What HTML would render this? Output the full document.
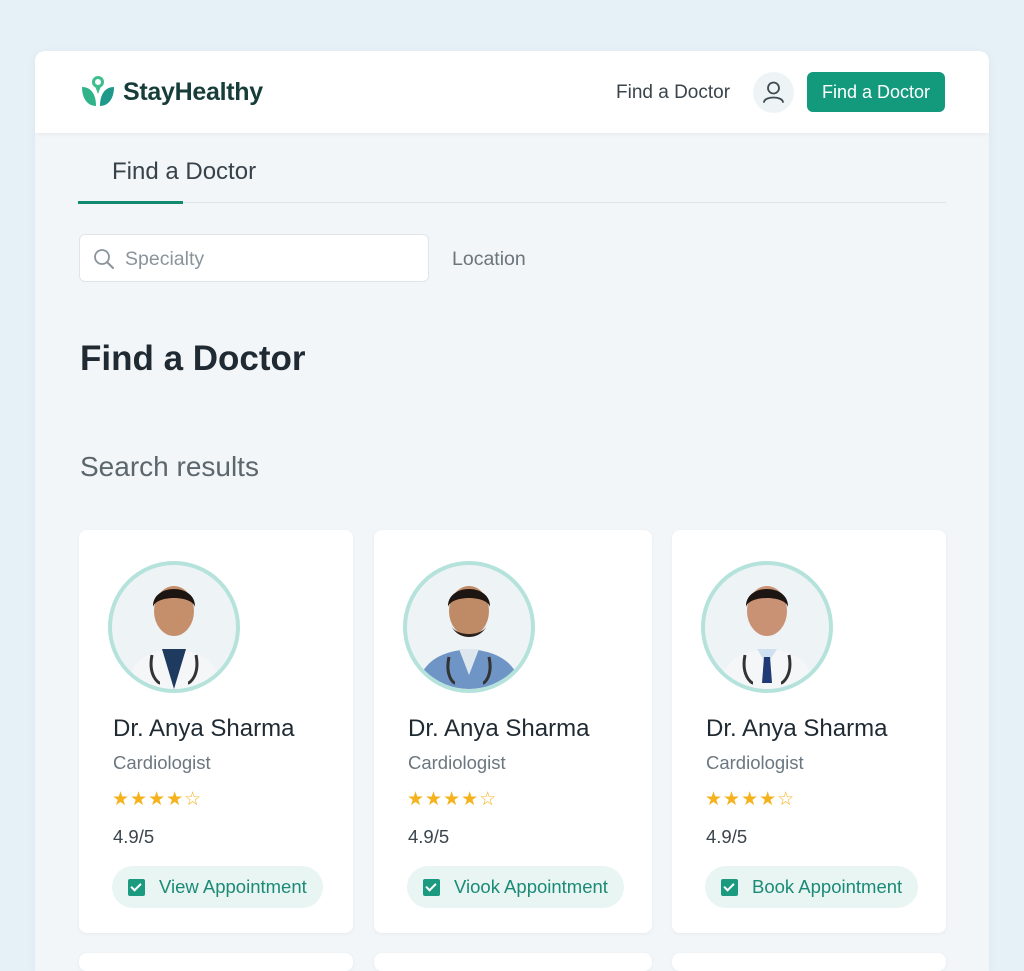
<!DOCTYPE html>
<html><head><style>
*{margin:0;padding:0;box-sizing:border-box}
html,body{width:1024px;height:971px;overflow:hidden}
body{background:#e6f1f7;font-family:"Liberation Sans",sans-serif;position:relative}
.wrap{position:absolute;left:35px;top:51px;width:954px;height:920px;background:#f2f6f8;border-radius:10px 10px 0 0;overflow:hidden;box-shadow:0 2px 10px rgba(0,0,0,.05)}
.hdr{position:absolute;left:0;top:0;width:954px;height:82px;background:#fff;box-shadow:0 2px 4px rgba(0,0,0,.04)}
.abs{position:absolute}
.card{position:absolute;top:479px;height:403px;background:#fff;border-radius:8px;box-shadow:0 1px 4px rgba(0,0,0,.05)}
.av{position:absolute;left:29px;top:31px;width:132px;height:132px;border-radius:50%;border:4px solid #b5e3dc;background:#eef3f6;overflow:hidden}
.nm{position:absolute;left:34px;top:185px;font-size:24px;color:#1f2a33}
.sp{position:absolute;left:34px;top:222px;font-size:18.5px;color:#6b7780}
.st{position:absolute;left:33px;top:258px;font-size:19px;color:#f5b21c;letter-spacing:1px}
.rt{position:absolute;left:34px;top:296px;font-size:18.5px;color:#3b454d}
.btn{position:absolute;left:33px;top:336px;height:42px;padding:0 16px 0 16px;border-radius:21px;background:#e8f5f3;color:#1b8a76;font-size:18.5px;line-height:42px;white-space:nowrap}
.cb{display:inline-block;width:17px;height:17px;background:#1b9a7f;border-radius:2px;vertical-align:-3px;margin-right:14px;position:relative}
.cb:after{content:"";position:absolute;left:5px;top:2px;width:4px;height:8px;border:solid #fff;border-width:0 2px 2px 0;transform:rotate(45deg)}
</style></head><body>
<div class="wrap">
 <div class="hdr">
  <svg class="abs" style="left:45px;top:24px" width="36" height="34" viewBox="0 0 36 34">
   <path d="M2 12 C10 12 16 18 16 31 C8 31 2 24 2 12Z" fill="#2fb389"/>
   <path d="M34 12 C26 12 20 18 20 31 C28 31 34 24 34 12Z" fill="#1f9a8a"/>
   <circle cx="18" cy="7" r="4.5" fill="none" stroke="#3cbf8c" stroke-width="3"/>
   <path d="M15 11 L18 19 L21 11Z" fill="#3cbf8c"/>
  </svg>
  <div class="abs" style="left:88px;top:27px;font-size:25px;font-weight:bold;color:#173d3a;letter-spacing:-.3px">StayHealthy</div>
  <div class="abs" style="left:581px;top:31px;font-size:19px;color:#3a444c">Find a Doctor</div>
  <div class="abs" style="left:718px;top:21px;width:41px;height:41px;border-radius:50%;background:#eef4f6">
   <svg width="41" height="41" viewBox="0 0 41 41"><circle cx="20.5" cy="16" r="5.5" fill="none" stroke="#3f4a52" stroke-width="1.8"/><path d="M11 30 C12 24 29 24 30 30" fill="none" stroke="#3f4a52" stroke-width="1.8" stroke-linecap="round"/></svg>
  </div>
  <div class="abs" style="left:772px;top:21px;width:138px;height:40px;border-radius:6px;background:#139a7d;color:#fff;font-size:18px;line-height:40px;text-align:center">Find a Doctor</div>
 </div>
 <div class="abs" style="left:77px;top:107px;font-size:24px;color:#37424a">Find a Doctor</div>
 <div class="abs" style="left:43px;top:151px;width:868px;height:1px;background:#dde4e8"></div>
 <div class="abs" style="left:43px;top:150px;width:105px;height:3px;background:#138a6e"></div>
 <div class="abs" style="left:44px;top:183px;width:350px;height:48px;background:#fff;border:1px solid #dfe5e8;border-radius:6px">
  <svg class="abs" style="left:12px;top:12px" width="24" height="24" viewBox="0 0 24 24"><circle cx="10" cy="10" r="7" fill="none" stroke="#8a949b" stroke-width="1.8"/><path d="M15 15 L21 21" stroke="#8a949b" stroke-width="2" stroke-linecap="round"/></svg>
  <div class="abs" style="left:45px;top:13px;font-size:19.5px;color:#8a949b">Specialty</div>
 </div>
 <div class="abs" style="left:417px;top:197px;font-size:19.5px;color:#6b757c">Location</div>
 <div class="abs" style="left:45px;top:288px;font-size:35px;font-weight:bold;color:#1f2a33">Find a Doctor</div>
 <div class="abs" style="left:45px;top:400px;font-size:28px;color:#5c666d">Search results</div>

 <div class="card" style="left:44px;width:274px">
  <div class="av"><svg width="124" height="124" viewBox="0 0 124 124"><path d="M14 124 C18 92 40 86 62 84 C84 86 106 92 110 124Z" fill="#f4f6f8"/><path d="M50 84 L62 124 L74 84Z" fill="#1f3a5f"/><ellipse cx="62" cy="46" rx="20" ry="25" fill="#c58f6c"/><path d="M41 42 C40 18 84 18 83 42 C80 30 44 30 41 42Z" fill="#1c1512"/><path d="M40 90 C36 110 46 118 48 118 M84 90 C88 110 78 118 76 118" fill="none" stroke="#333" stroke-width="3"/></svg></div>
  <div class="nm">Dr. Anya Sharma</div><div class="sp">Cardiologist</div><div class="st">★★★★☆</div><div class="rt">4.9/5</div>
  <div class="btn"><span class="cb"></span>View Appointment</div>
 </div>
 <div class="card" style="left:339px;width:278px">
  <div class="av"><svg width="124" height="124" viewBox="0 0 124 124"><path d="M10 124 C14 94 38 86 62 84 C86 86 110 94 114 124Z" fill="#6f95c6"/><path d="M52 84 L62 110 L72 84Z" fill="#dfe7ee"/><ellipse cx="62" cy="46" rx="20" ry="25" fill="#bf8a66"/><path d="M41 42 C40 18 84 18 83 42 C80 30 44 30 41 42Z" fill="#1c1512"/><path d="M44 60 C50 76 74 76 80 60 C76 72 48 72 44 60Z" fill="#2b211c"/><path d="M42 92 C38 110 46 118 48 118 M82 92 C86 110 78 118 76 118" fill="none" stroke="#333" stroke-width="3"/></svg></div>
  <div class="nm">Dr. Anya Sharma</div><div class="sp">Cardiologist</div><div class="st">★★★★☆</div><div class="rt">4.9/5</div>
  <div class="btn"><span class="cb"></span>Viook Appointment</div>
 </div>
 <div class="card" style="left:637px;width:274px">
  <div class="av"><svg width="124" height="124" viewBox="0 0 124 124"><path d="M14 124 C18 92 40 86 62 84 C84 86 106 92 110 124Z" fill="#f4f6f8"/><path d="M52 84 L62 100 L72 84Z" fill="#cfe0f0"/><path d="M59 92 L65 92 L67 118 L57 118Z" fill="#1f3a75"/><ellipse cx="62" cy="46" rx="20" ry="25" fill="#c99274"/><path d="M41 42 C40 18 84 18 83 42 C80 30 44 30 41 42Z" fill="#1c1512"/><path d="M40 90 C36 110 46 118 48 118 M84 90 C88 110 78 118 76 118" fill="none" stroke="#333" stroke-width="3"/></svg></div>
  <div class="nm">Dr. Anya Sharma</div><div class="sp">Cardiologist</div><div class="st">★★★★☆</div><div class="rt">4.9/5</div>
  <div class="btn"><span class="cb"></span>Book Appointment</div>
 </div>
 <div class="card" style="left:44px;width:274px;top:902px;height:18px"></div>
 <div class="card" style="left:339px;width:278px;top:902px;height:18px"></div>
 <div class="card" style="left:637px;width:274px;top:902px;height:18px"></div>
</div>
</body></html>
